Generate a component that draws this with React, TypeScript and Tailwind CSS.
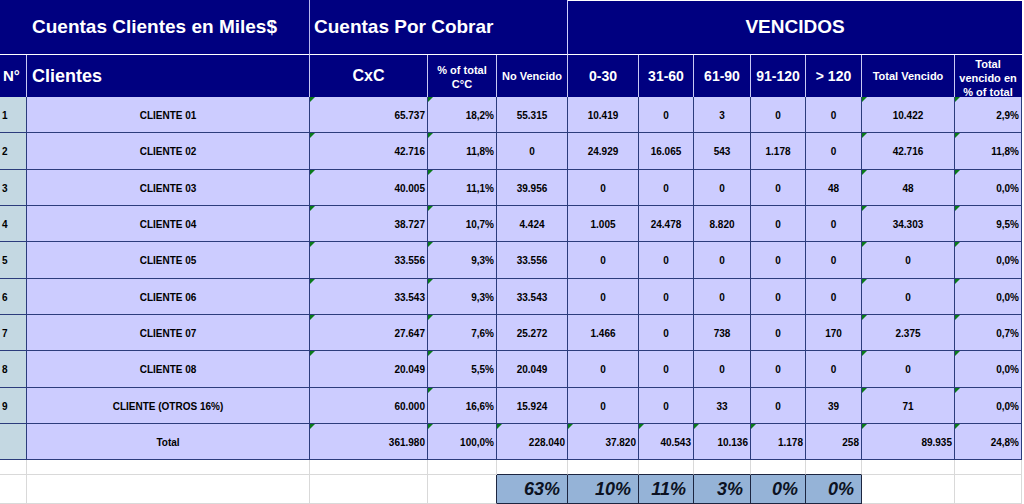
import React from "react";

type Row = { n: string; name: string; vals: string[]; tri: number[]; total?: boolean };

const rows: Row[] = [
  { n: "1", name: "CLIENTE 01", vals: ["65.737", "18,2%", "55.315", "10.419", "0", "3", "0", "0", "10.422", "2,9%"], tri: [2, 3, 10, 11] },
  { n: "2", name: "CLIENTE 02", vals: ["42.716", "11,8%", "0", "24.929", "16.065", "543", "1.178", "0", "42.716", "11,8%"], tri: [2, 3, 10, 11] },
  { n: "3", name: "CLIENTE 03", vals: ["40.005", "11,1%", "39.956", "0", "0", "0", "0", "48", "48", "0,0%"], tri: [2, 3, 10, 11] },
  { n: "4", name: "CLIENTE 04", vals: ["38.727", "10,7%", "4.424", "1.005", "24.478", "8.820", "0", "0", "34.303", "9,5%"], tri: [2, 3, 10, 11] },
  { n: "5", name: "CLIENTE 05", vals: ["33.556", "9,3%", "33.556", "0", "0", "0", "0", "0", "0", "0,0%"], tri: [2, 3, 10, 11] },
  { n: "6", name: "CLIENTE 06", vals: ["33.543", "9,3%", "33.543", "0", "0", "0", "0", "0", "0", "0,0%"], tri: [2, 3, 10, 11] },
  { n: "7", name: "CLIENTE 07", vals: ["27.647", "7,6%", "25.272", "1.466", "0", "738", "0", "170", "2.375", "0,7%"], tri: [2, 3, 10, 11] },
  { n: "8", name: "CLIENTE 08", vals: ["20.049", "5,5%", "20.049", "0", "0", "0", "0", "0", "0", "0,0%"], tri: [2, 3, 10, 11] },
  { n: "9", name: "CLIENTE (OTROS 16%)", vals: ["60.000", "16,6%", "15.924", "0", "0", "33", "0", "39", "71", "0,0%"], tri: [3, 10, 11] },
  { n: "", name: "Total", vals: ["361.980", "100,0%", "228.040", "37.820", "40.543", "10.136", "1.178", "258", "89.935", "24,8%"], tri: [2, 3, 4, 5, 6, 7, 8, 10, 11], total: true },
];

const heights = ["h-[36px]", "h-[37px]", "h-[36px]", "h-[36px]", "h-[37px]", "h-[36px]", "h-[36px]", "h-[37px]", "h-[36px]", "h-[36px]"];

const dataAlign = ["justify-center", "justify-end pr-[2px]", "justify-end pr-[2px]", "justify-center", "justify-center", "justify-center", "justify-center", "justify-center", "justify-center", "justify-center", "justify-end pr-[2px]"];

function Tri() {
  return <span className="absolute left-0 top-0 w-0 h-0 border-t-[5px] border-t-[#0a7a1a] border-r-[5px] border-r-transparent" />;
}

const hdr = "h-[42px] bg-[#000080] border-r border-r-[#c8c8f4] flex items-center justify-center text-white font-bold text-center";

export default function App() {
  return (
    <div className="w-[1024px] h-[504px] bg-white overflow-hidden font-['Liberation_Sans',Arial,sans-serif]">
      <div className="grid w-[1022px] grid-cols-[27px_283px_118px_69px_71px_71px_55px_57px_55px_56px_93px_67px]">
        {/* header row 1 */}
        <div className="col-span-2 h-[55px] bg-[#000080] border-r border-r-[#b8b8ee] border-b border-b-white flex items-center justify-center text-white font-bold text-[19px]">
          Cuentas Clientes en Miles$
        </div>
        <div className="col-span-3 h-[55px] bg-[#000080] border-r border-r-[#d0d0ff] border-b border-b-white flex items-center pl-[4px] text-white font-bold text-[19px]">
          Cuentas Por Cobrar
        </div>
        <div className="col-span-7 h-[55px] bg-[#000080] border-t border-t-white border-b border-b-white flex items-center justify-center text-white font-bold text-[19px]">
          VENCIDOS
        </div>

        {/* header row 2 */}
        <div className={`${hdr} !justify-start pl-[3px] text-[15px] border-r-[#8a8ae0]`}>N°</div>
        <div className={`${hdr} !justify-start pl-[5px] text-[18px]`}>Clientes</div>
        <div className={`${hdr} text-[16px]`}>CxC</div>
        <div className={`${hdr} text-[11px] leading-[14px] pt-[2px]`}>% of total<br />C°C</div>
        <div className={`${hdr} text-[11px]`}>No Vencido</div>
        <div className={`${hdr} text-[14px]`}>0-30</div>
        <div className={`${hdr} text-[14px]`}>31-60</div>
        <div className={`${hdr} text-[14px]`}>61-90</div>
        <div className={`${hdr} text-[14px]`}>91-120</div>
        <div className={`${hdr} text-[14px]`}>&gt; 120</div>
        <div className={`${hdr} text-[11px]`}>Total Vencido</div>
        <div className={`${hdr} text-[11px] leading-[14px] pt-[3px] !border-r-[#000080]`}>Total<br />vencido en<br />% of total</div>

        {/* data rows */}
        {rows.map((r, i) => {
          const h = heights[i];
          const cells = [r.name, ...r.vals];
          return (
            <React.Fragment key={i}>
              <div className={`${h} bg-[#c4d8e2] border-r border-b border-[#2c3c7c] flex items-center pl-[2px] pt-[1px] text-[10px] font-bold text-black`}>
                {r.n}
              </div>
              {cells.map((c, j) => {
                const col = j + 1;
                const align = r.total && j >= 1 ? "justify-end pr-[2px]" : dataAlign[j];
                return (
                  <div
                    key={j}
                    className={`${h} relative bg-[#ccccff] border-r border-b border-[#2c3c7c] flex items-center pt-[1px] ${align} text-[10px] font-bold text-black whitespace-nowrap`}
                  >
                    {r.tri.includes(col) && <Tri />}
                    {c}
                  </div>
                );
              })}
            </React.Fragment>
          );
        })}

        {/* blank row */}
        {Array.from({ length: 12 }).map((_, j) => (
          <div
            key={"b" + j}
            className={`h-[15px] bg-white border-r border-r-[#d9d9d9] border-b ${j >= 4 && j <= 9 ? "border-b-[#1c2540]" : "border-b-[#d9d9d9]"}`}
          />
        ))}

        {/* percent row */}
        {Array.from({ length: 12 }).map((_, j) => {
          const pct: Record<number, string> = { 4: "63%", 5: "10%", 6: "11%", 7: "3%", 8: "0%", 9: "0%" };
          if (pct[j]) {
            return (
              <div
                key={"p" + j}
                className="h-[29px] bg-[#95b3d7] border-r border-b border-[#1c2540] flex items-center justify-end pr-[7px] text-[18px] font-bold italic text-[#0c1222]"
              >
                {pct[j]}
              </div>
            );
          }
          return (
            <div
              key={"p" + j}
              className={`h-[29px] bg-white border-r border-b border-b-[#d9d9d9] ${j === 3 ? "border-r-[#1c2540]" : "border-r-[#d9d9d9]"}`}
            />
          );
        })}
      </div>
    </div>
  );
}
